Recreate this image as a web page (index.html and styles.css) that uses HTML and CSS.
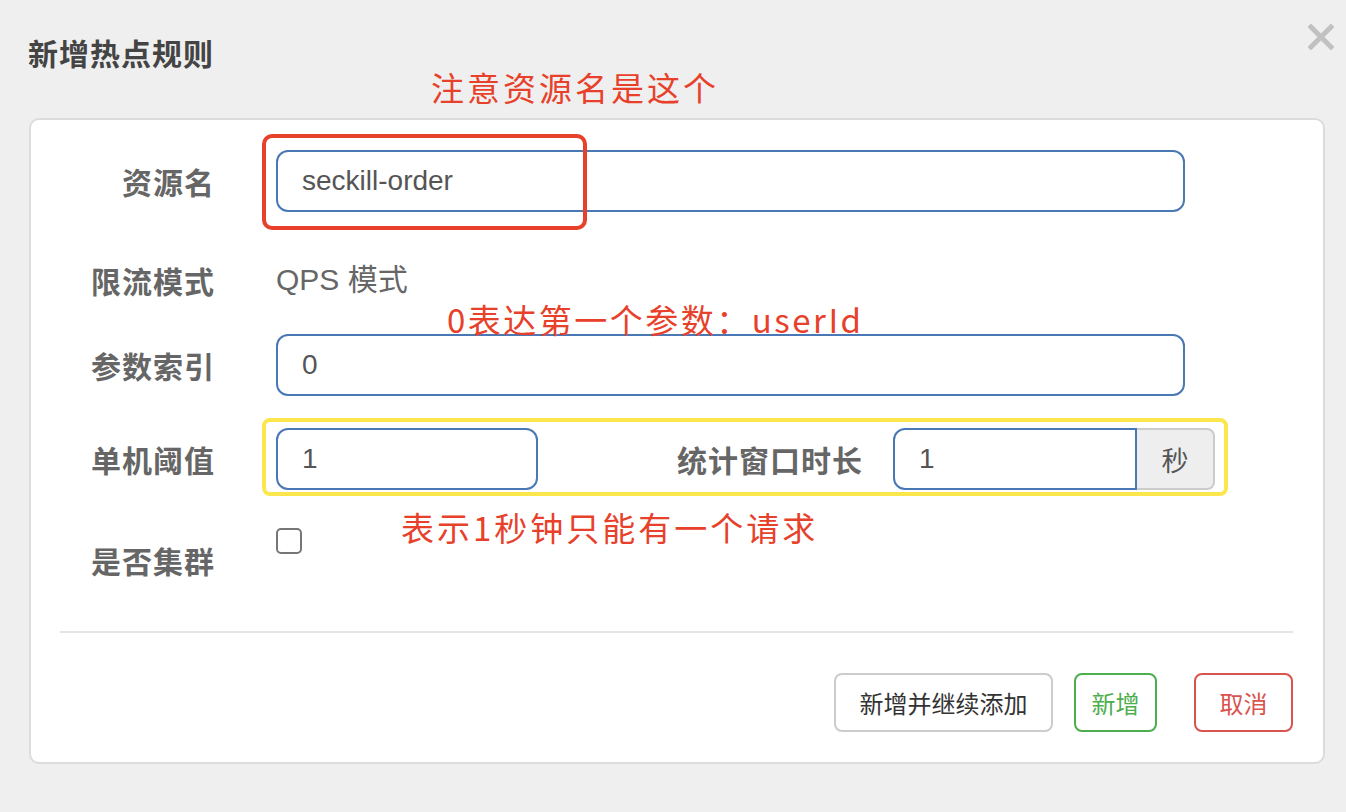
FILE: index.html
```html
<!DOCTYPE html>
<html lang="zh-CN">

<head>
    <meta charset="UTF-8">
    <meta name="viewport" content="width=device-width, initial-scale=1.0">
    <title>新增热点规则</title>
    <link rel="stylesheet" href="styles.css">
</head>

<body>
    <div class="modal">
        <div class="modal-header">
            <h4 class="modal-title">新增热点规则</h4>
            <button class="close" type="button">
                <svg width="26" height="26" viewBox="0 0 26 26">
                    <path d="M3 3 L23 23 M23 3 L3 23" stroke="#c1c1c1" stroke-width="5" stroke-linecap="square"/>
                </svg>
            </button>
        </div>

        <div class="panel">
            <form class="form">
                <div class="row">
                    <label class="row-label">资源名</label>
                    <div class="row-field">
                        <input type="text" class="input" value="seckill-order">
                    </div>
                </div>
                <div class="row">
                    <label class="row-label row-label-static">限流模式</label>
                    <div class="row-field">
                        <p class="static-text">QPS 模式</p>
                    </div>
                </div>
                <div class="row">
                    <label class="row-label">参数索引</label>
                    <div class="row-field">
                        <input type="text" class="input" value="0">
                    </div>
                </div>
                <div class="row row-pair">
                    <label class="row-label">单机阈值</label>
                    <div class="row-field row-field-wide">
                        <input type="text" class="input input-short" value="1">
                        <label class="inline-label">统计窗口时长</label>
                        <div class="input-group">
                            <input type="text" class="input input-left" value="1">
                            <span class="addon">秒</span>
                        </div>
                    </div>
                </div>
                <div class="row row-check">
                    <label class="row-label row-label-check">是否集群</label>
                    <div class="row-field">
                        <span class="checkbox"></span>
                    </div>
                </div>
            </form>

            <hr class="divider">

            <div class="footer">
                <button type="button" class="btn btn-default">新增并继续添加</button>
                <button type="button" class="btn btn-success">新增</button>
                <button type="button" class="btn btn-danger">取消</button>
            </div>
        </div>

        <!-- 标注 -->
        <div class="mark mark-red"></div>
        <div class="mark mark-yellow"></div>
        <p class="note note-1">注意资源名是这个</p>
        <p class="note note-2">0表达第一个参数：userId</p>
        <p class="note note-3">表示1秒钟只能有一个请求</p>
    </div>
</body>

</html>
```

FILE: styles.css
```css
* {
    margin: 0;
    padding: 0;
    box-sizing: border-box;
}

body {
    background-color: #efefef;
    font-family: "Liberation Sans", "Noto Sans CJK SC", sans-serif;
}

.modal {
    position: relative;
    width: 1346px;
    height: 812px;
}

.modal-header {
    height: 118px;
    display: flex;
    justify-content: space-between;
    align-items: flex-start;
    padding: 34px 12px 0 28px;
}

.modal-title {
    font-family: "Noto Sans CJK SC", sans-serif;
    font-size: 30px;
    line-height: 36px;
    letter-spacing: 1px;
    font-weight: bold;
    color: #444;
}

.close {
    background: transparent;
    border: none;
    outline: none;
    margin-top: -10px;
    width: 26px;
    height: 26px;
}

.panel {
    margin: 0 21px 0 29px;
    background-color: #fff;
    border: 2px solid #dcdcdc;
    border-radius: 10px;
    padding: 30px 30px 30px 0;
}

.form {
    display: flex;
    flex-direction: column;
}

.row {
    display: flex;
    align-items: center;
    height: 62px;
    margin-bottom: 30px;
}

.row-pair {
    margin-top: 2px;
}

.row-label {
    width: 184px;
    margin-right: 61px;
    text-align: right;
    font-family: "Noto Sans CJK SC", sans-serif;
    font-size: 30px;
    letter-spacing: 1px;
    font-weight: bold;
    color: #666;
    line-height: 36px;
}

.row-label-static {
    padding-top: 14px;
}

.row-field {
    width: 909px;
}

.row-field-wide {
    width: 939px;
    display: flex;
    align-items: center;
}

.static-text {
    padding-top: 14px;
    font-size: 30px;
    line-height: 36px;
    color: #666;
    font-family: "Liberation Sans", "Noto Sans CJK SC", sans-serif;
}

.input {
    display: block;
    width: 100%;
    height: 62px;
    border: 2px solid #4a78b4;
    border-radius: 12px;
    padding-left: 24px;
    font-size: 28px;
    color: #555;
    font-family: "Liberation Sans", sans-serif;
    outline: none;
    background: #fff;
}

.input-short {
    width: 262px;
    flex: none;
}

.inline-label {
    flex: 1;
    text-align: right;
    padding-right: 30px;
    font-family: "Noto Sans CJK SC", sans-serif;
    font-size: 30px;
    letter-spacing: 1px;
    font-weight: bold;
    color: #666;
}

.input-group {
    width: 322px;
    display: flex;
}

.input-left {
    width: 244px;
    border-radius: 12px 0 0 12px;
}

.addon {
    width: 78px;
    height: 62px;
    background-color: #eee;
    border: 2px solid #ccc;
    border-left: none;
    border-radius: 0 8px 8px 0;
    display: flex;
    justify-content: center;
    align-items: center;
    font-family: "Noto Sans CJK SC", sans-serif;
    font-size: 27px;
    color: #555;
}

.row-check {
    align-items: flex-start;
    margin-bottom: 0;
}

.row-label-check {
    padding-top: 22px;
}

.checkbox {
    display: block;
    margin-top: 8px;
    width: 26px;
    height: 26px;
    border: 2px solid #767676;
    border-radius: 5px;
    background: #fff;
}

.divider {
    margin: 49px 0 0 29px;
    border: none;
    border-top: 2px solid #e5e5e5;
}

.footer {
    display: flex;
    justify-content: flex-end;
    margin-top: 40px;
}

.btn {
    height: 59px;
    border-radius: 8px;
    border: 2px solid #ccc;
    background: #fff;
    font-family: "Noto Sans CJK SC", sans-serif;
    font-size: 24px;
    outline: none;
}

.btn-default {
    width: 219px;
    color: #333;
}

.btn-success {
    width: 83px;
    margin-left: 21px;
    color: #4cae4c;
    border-color: #4cae4c;
}

.btn-danger {
    width: 99px;
    margin-left: 37px;
    color: #d9534f;
    border-color: #d9534f;
}

/* 标注 */
.mark {
    position: absolute;
    border-style: solid;
    border-width: 4px;
}

.mark-red {
    left: 262px;
    top: 134px;
    width: 325px;
    height: 96px;
    border-color: #e8412b;
    border-radius: 10px;
}

.mark-yellow {
    left: 262px;
    top: 418px;
    width: 966px;
    height: 78px;
    border-color: #fbe64c;
    border-radius: 8px;
}

.note {
    position: absolute;
    font-family: "Noto Sans CJK SC", sans-serif;
    font-size: 33px;
    line-height: 1;
    letter-spacing: 3px;
    color: #e8412b;
    white-space: nowrap;
}

.note-1 {
    left: 431px;
    top: 71px;
}

.note-2 {
    left: 447px;
    top: 303px;
    letter-spacing: 2.5px;
}

.note-3 {
    left: 401px;
    top: 511px;
}
```
